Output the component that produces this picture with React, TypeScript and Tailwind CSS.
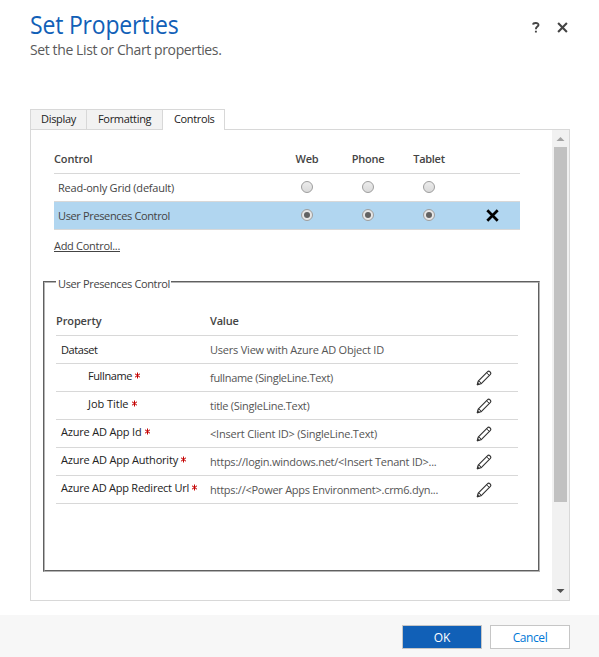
function Radio({ on }: { on?: boolean }) {
  return (
    <span className={`mx-auto mt-[7px] flex h-3 w-3 items-center justify-center rounded-full border border-[#9d9d9d] ${on ? 'bg-[#e6e6e6]' : 'bg-linear-to-b from-[#ececec] to-[#dadada]'}`}>
      {on && <span className="h-1.5 w-1.5 rounded-full bg-[#626262]" />}
    </span>
  );
}

function Pencil() {
  return (
    <svg width="16" height="16" viewBox="0 0 16 16" fill="none" stroke="#333" strokeWidth="1.15" strokeLinejoin="round">
      <path d="M1.4 14.6 2.2 11.1 11.4 1.9Q12.2 1 13.2 1.2L14.6 2.5Q15.2 3.4 14.4 4.4L5 13.8Z" />
      <path d="M2.2 11.1Q4.6 11.2 5 13.8M10.5 2.8 13.5 5.5" strokeWidth="1" />
      <path d="M1 15 1.7 12.5 3.5 14.4Z" fill="#333" strokeWidth=".5" />
    </svg>
  );
}

function Star() {
  return (
    <svg className="ml-[2px] inline-block align-[1px]" width="7" height="7" viewBox="0 0 7 7" stroke="#c40000" strokeWidth="1">
      <path d="M3.5 .5V6.5M1 1.8 6 5.2M6 1.8 1 5.2" />
    </svg>
  );
}

function Cross({ size, color, width }: { size: number; color: string; width: number }) {
  return (
    <svg width={size} height={size} viewBox="0 0 12 12" stroke={color} strokeWidth={width}>
      <path d="M1.2 1.2 10.8 10.8M10.8 1.2 1.2 10.8" />
    </svg>
  );
}

const properties = [
  { label: 'Dataset', lt: 'tracking-[-0.42px]', value: 'Users View with Azure AD Object ID', vt: 'tracking-[-0.214px]', nested: false, required: false },
  { label: 'Fullname', lt: 'tracking-[-0.4px]', value: 'fullname (SingleLine.Text)', vt: 'tracking-[-0.319px]', nested: true, required: true },
  { label: 'Job Title', lt: 'tracking-[-0.04px]', value: 'title (SingleLine.Text)', vt: 'tracking-[-0.267px]', nested: true, required: true },
  { label: 'Azure AD App Id', lt: 'tracking-[-0.184px]', value: '<Insert Client ID> (SingleLine.Text)', vt: 'tracking-[-0.206px]', nested: false, required: true },
  { label: 'Azure AD App Authority', lt: 'tracking-[-0.188px]', value: 'https://login.windows.net/<Insert Tenant ID>...', vt: 'tracking-[-0.237px]', nested: false, required: true },
  { label: 'Azure AD App Redirect Url', lt: 'tracking-[-0.238px]', value: 'https://<Power Apps Environment>.crm6.dyn...', vt: 'tracking-[-0.263px]', nested: false, required: true },
];

export default function App() {
  return (
    <div className="flex h-[657px] w-[599px] flex-col overflow-hidden bg-white font-['Open_Sans','Noto_Sans',sans-serif] text-[11px] leading-4 whitespace-nowrap text-[#444]">
      <header className="flex h-[109px] shrink-0 justify-between pl-[30px] pr-[31px]">
        <div>
          <h1 className="w-[164px] origin-left scale-x-[0.92] pt-2 text-[25px] leading-8 tracking-[-0.2px] text-[#1160b7]">Set Properties</h1>
          <p className="text-[14px] leading-[19px] tracking-[-0.39px] text-[#5a5a5a]">Set the List or Chart properties.</p>
        </div>
        <div className="flex gap-[17px] pt-[22px]">
          <svg width="8" height="11" viewBox="0 0 8 11" fill="none" stroke="#444" strokeWidth="1.9">
            <path d="M1.1 2.6C1.3.5 6.6.4 6.5 3 6.4 4.7 3.9 4.6 3.9 7.3M3.9 8.7V10.5" />
          </svg>
          <Cross size={11} color="#444" width={2.3} />
        </div>
      </header>

      <nav className="z-10 ml-[30px] flex h-[21px] shrink-0 text-[#222]">
        <div className="mb-px w-[57px] border border-b-0 border-[#d8d8d8] bg-[#f2f2f2] pt-px pl-2.5 tracking-[-0.304px]">Display</div>
        <div className="mb-px w-[76px] border-t border-r border-[#d8d8d8] bg-[#f2f2f2] pt-px pl-[11px] tracking-[-0.32px]">Formatting</div>
        <div className="w-[62px] border-t border-r border-[#d8d8d8] bg-white pt-px pl-[11px] tracking-[-0.356px]">Controls</div>
      </nav>

      <main className="-mt-px ml-[30px] flex h-[472px] w-[540px] shrink-0 border border-[#d8d8d8]">
        <div className="flex-1 pl-3">
          <section className="ml-[11px] w-[466px]">
            <div className="grid h-11 grid-cols-[223px_60px_62px_60px_61px] border-b border-[#d8d8d8] pt-[21px] text-center font-semibold">
              <span className="text-left tracking-[-0.15px]">Control</span>
              <span className="tracking-[-0.195px]">Web</span>
              <span className="tracking-[-0.258px]">Phone</span>
              <span className="tracking-[-0.283px]">Tablet</span>
            </div>
            <div className="grid h-7 grid-cols-[223px_60px_62px_60px_61px] border-b border-[#d8d8d8]">
              <span className="pt-1.5 pl-1 tracking-[-0.224px]">Read-only Grid (default)</span>
              <Radio /><Radio /><Radio />
            </div>
            <div className="grid h-7 grid-cols-[223px_60px_62px_60px_61px] border-b border-[#d8d8d8] bg-[#b1d6f0]">
              <span className="pt-1.5 pl-1 tracking-[-0.359px]">User Presences Control</span>
              <Radio on /><Radio on /><Radio on />
              <span className="pt-[7px] pl-[27px]"><Cross size={13} color="#000" width={2.5} /></span>
            </div>
            <div className="h-11 pt-2">
              <a className="inline-block h-3.5 border-b border-[#444] tracking-[-0.289px]">Add Control...</a>
            </div>
          </section>

          <fieldset className="h-[298px] w-[497px] border-2 border-[#b4b4b4] [border-style:groove] pl-[11px]">
            <legend className="h-4 pr-px pl-[2px] pt-[3px] leading-[13px] tracking-[-0.359px]">User Presences Control</legend>
            <div className="w-[462px]">
              <div className="grid h-[46px] grid-cols-[154px_1fr] border-b border-[#d8d8d8] pt-[23px] font-semibold">
                <span className="tracking-[-0.112px]">Property</span>
                <span className="tracking-[-0.225px]">Value</span>
              </div>
              {properties.map((p) => (
                <div key={p.label} className="grid h-7 grid-cols-[154px_266px_1fr] border-b border-[#d8d8d8]">
                  <span className={`text-[#222] ${p.nested ? 'pl-8' : 'pl-[5px]'} ${p.required ? 'pt-1' : 'pt-1.5'}`}>
                    <span className={p.lt}>{p.label}</span>
                    {p.required && <Star />}
                  </span>
                  <span className={`pt-1.5 text-[#555] ${p.vt}`}>{p.value}</span>
                  {p.required && <span className="pt-1.5"><Pencil /></span>}
                </div>
              ))}
            </div>
          </fieldset>
        </div>

        <div className="flex w-[17px] flex-col items-center bg-[#f1f1f1] pr-px">
          <svg className="h-[17px] w-4 shrink-0" viewBox="0 0 16 17" fill="#a3a3a3"><path d="M4.5 11H12.5L8.5 7Z" /></svg>
          <div className="ml-px h-[355px] w-[13px] bg-[#c1c1c1]" />
          <svg className="mt-auto h-[17px] w-4 shrink-0" viewBox="0 0 16 17" fill="#505050"><path d="M4.5 6H12.5L8.5 10Z" /></svg>
        </div>
      </main>

      <footer className="mt-auto flex h-[42px] shrink-0 gap-2 bg-[#f7f7f7] pt-[10px] pl-[402px] text-[12px]">
        <button className="h-6 w-20 border border-[#c6c6c6] bg-[#1160b7] pt-px font-medium tracking-[-0.1px] text-white">OK</button>
        <button className="h-6 w-20 border border-[#c6c6c6] bg-white pt-px tracking-[-0.4px] text-[#0078d7]">Cancel</button>
      </footer>
    </div>
  );
}
